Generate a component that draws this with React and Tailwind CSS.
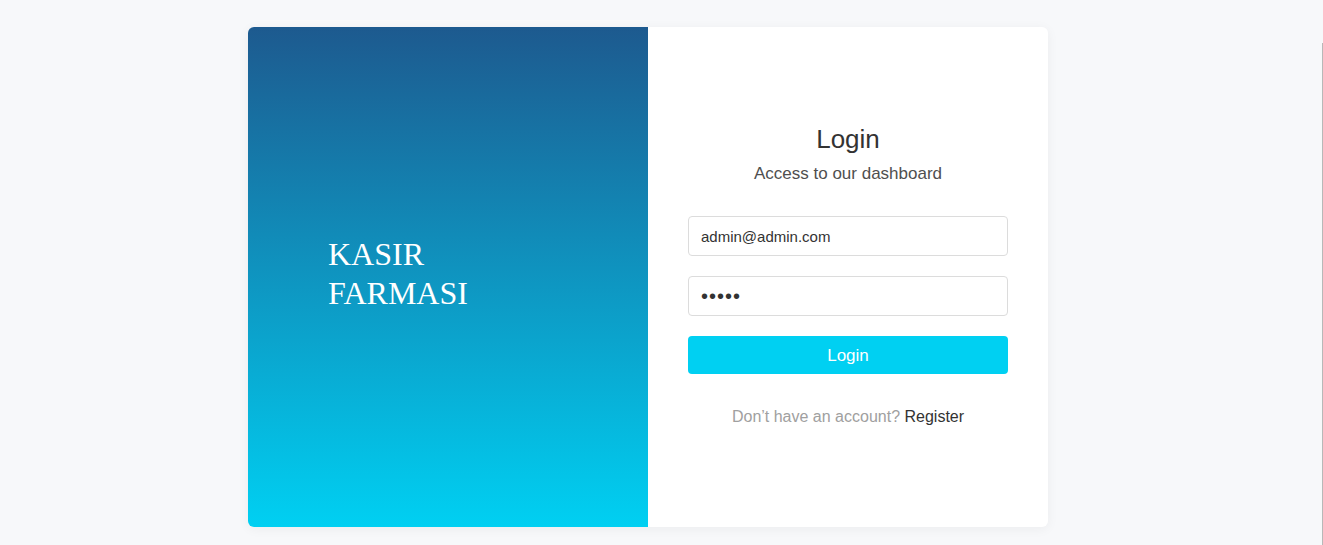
export default function App() {
  return (
    <div className="min-h-[545px] bg-[#f7f8fa] flex justify-center pt-[27px] pr-[27px] relative" style={{ fontFamily: '"Liberation Sans", Arial, sans-serif' }}>
      <div className="w-[800px] h-[500px] flex rounded-md overflow-hidden bg-white shadow-[0_2px_12px_rgba(0,0,0,0.05)]">
        <div className="w-[400px] h-full bg-[linear-gradient(180deg,#1d5a8f,#00d0f2)] flex items-center pl-[80px] pb-[6px]">
          <div className="text-white text-[32px] leading-[39px]" style={{ fontFamily: '"Liberation Serif", "Times New Roman", serif' }}>
            KASIR<br />FARMASI
          </div>
        </div>
        <div className="w-[400px] h-full flex flex-col items-center px-[40px] pt-[95px]">
          <h1 className="text-[26px] leading-[34px] text-[#333333]">Login</h1>
          <p className="text-[17px] leading-[24px] text-[#4f4f4f] mt-[6px]">Access to our dashboard</p>
          <div className="w-[320px] mt-[30px] flex flex-col">
            <input
              type="text"
              defaultValue="admin@admin.com"
              className="h-[40px] w-full border border-[#dcdcdc] rounded-[4px] px-[12px] text-[15px] text-[#333333] outline-none"
            />
            <input
              type="password"
              defaultValue="admin"
              className="h-[40px] w-full border border-[#dcdcdc] rounded-[4px] px-[12px] text-[20px] tracking-[1px] text-[#333333] outline-none mt-[20px]"
            />
            <button className="h-[38px] w-full bg-[#00d0f2] rounded-[4px] text-white text-[17px] pt-[1px] mt-[20px]">Login</button>
            <div className="text-center mt-[31px] text-[16px] leading-[24px]">
              <span className="text-[#a0a0a0]">Don’t have an account? </span>
              <span className="text-[#333333]">Register</span>
            </div>
          </div>
        </div>
      </div>
      <div className="absolute right-0 top-[43px] bottom-0 w-[1px] bg-[#b8b8b8]" />
    </div>
  );
}
